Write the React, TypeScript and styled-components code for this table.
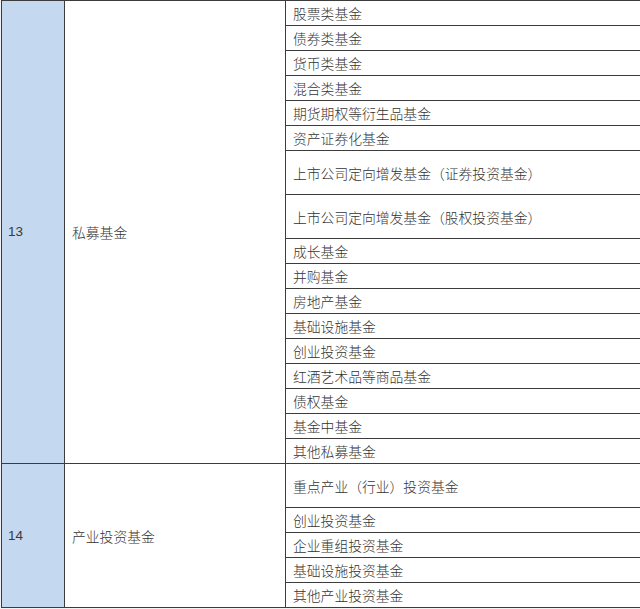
import React from "react";
import styled, { createGlobalStyle } from "styled-components";

const GlobalStyle = createGlobalStyle`
  html, body {
    margin: 0;
    padding: 0;
    background: #f2f2f2;
    overflow: hidden;
  }
  body {
    font-family: "Noto Sans CJK SC", "Liberation Sans", sans-serif;
  }
`;

const Sheet = styled.div`
  width: 640px;
  height: 609px;
  overflow: hidden;
`;

const Table = styled.table`
  border-collapse: collapse;
  table-layout: fixed;
  width: 720px;
  margin-left: 1px;
  background: #ffffff;
  color: #333333;
  font-size: 13.8px;
  font-weight: 300;
`;

const Row = styled.tr<{ $tall?: boolean }>`
  height: ${(p) => (p.$tall ? "44px" : "25px")};
`;

const Cell = styled.td<{ $accent?: boolean }>`
  border: 1px solid #3c3c3c;
  padding: 0 0 0 7px;
  vertical-align: middle;
  white-space: nowrap;
  line-height: 16px;
  background: ${(p) => (p.$accent ? "#c4d8f0" : "#ffffff")};
`;

const NumberCell = styled(Cell)`
  font-family: "Liberation Sans", "DejaVu Sans", sans-serif;
  font-size: 13.5px;
  font-weight: 400;
  padding-left: 6px;
  color: #3a3a3a;
`;

type Item = { label: string; tall?: boolean };
type Group = { no: string; name: string; items: Item[] };

const groups: Group[] = [
  {
    no: "13",
    name: "私募基金",
    items: [
      { label: "股票类基金" },
      { label: "债券类基金" },
      { label: "货币类基金" },
      { label: "混合类基金" },
      { label: "期货期权等衍生品基金" },
      { label: "资产证券化基金" },
      { label: "上市公司定向增发基金（证券投资基金）", tall: true },
      { label: "上市公司定向增发基金（股权投资基金）", tall: true },
      { label: "成长基金" },
      { label: "并购基金" },
      { label: "房地产基金" },
      { label: "基础设施基金" },
      { label: "创业投资基金" },
      { label: "红酒艺术品等商品基金" },
      { label: "债权基金" },
      { label: "基金中基金" },
      { label: "其他私募基金" },
    ],
  },
  {
    no: "14",
    name: "产业投资基金",
    items: [
      { label: "重点产业（行业）投资基金", tall: true },
      { label: "创业投资基金" },
      { label: "企业重组投资基金" },
      { label: "基础设施投资基金" },
      { label: "其他产业投资基金" },
    ],
  },
];

export default function App() {
  return (
    <Sheet>
      <GlobalStyle />
      <Table>
        <colgroup>
          <col style={{ width: 63 }} />
          <col style={{ width: 221 }} />
          <col />
        </colgroup>
        <tbody>
          {groups.map((g) =>
            g.items.map((item, i) => (
              <Row key={g.no + "-" + i} $tall={item.tall}>
                {i === 0 && (
                  <>
                    <NumberCell $accent rowSpan={g.items.length}>
                      {g.no}
                    </NumberCell>
                    <Cell rowSpan={g.items.length}>{g.name}</Cell>
                  </>
                )}
                <Cell>{item.label}</Cell>
              </Row>
            ))
          )}
        </tbody>
      </Table>
    </Sheet>
  );
}
